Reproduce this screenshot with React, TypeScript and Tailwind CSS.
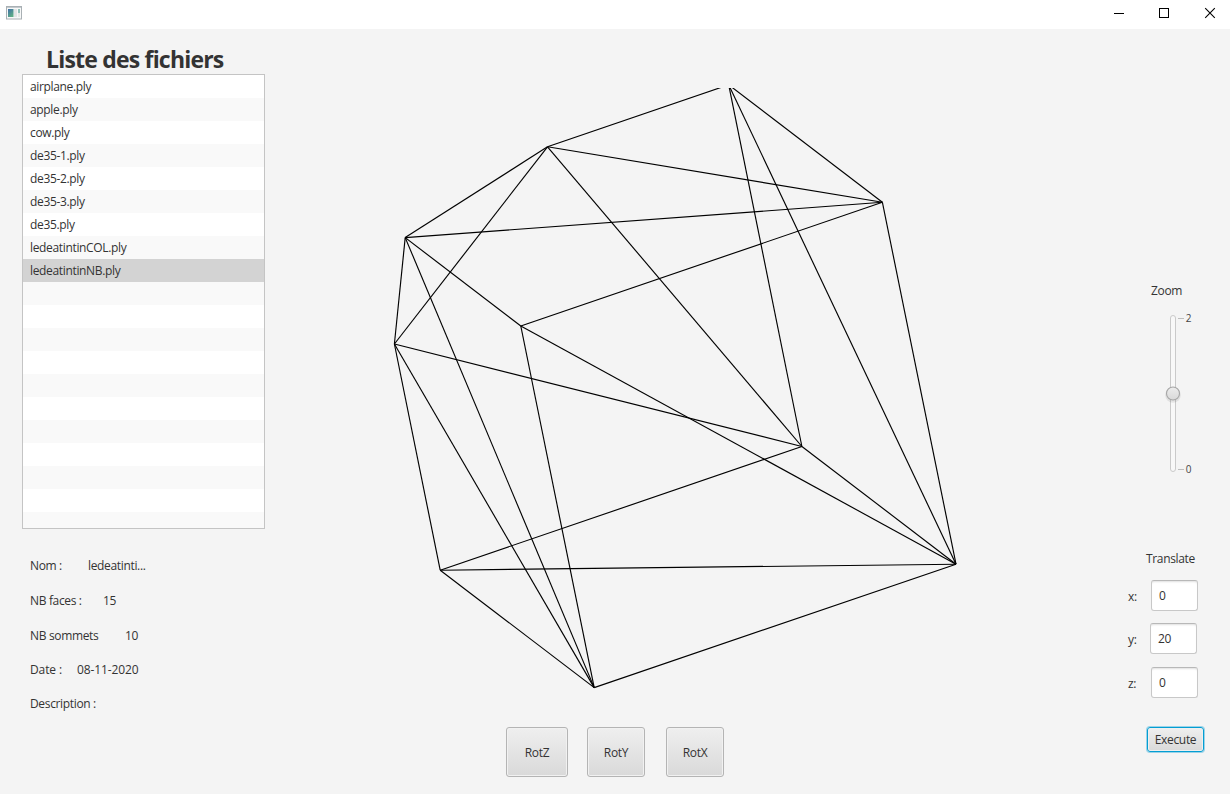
import React from "react";

const files = [
  "airplane.ply",
  "apple.ply",
  "cow.ply",
  "de35-1.ply",
  "de35-2.ply",
  "de35-3.ply",
  "de35.ply",
  "ledeatintinCOL.ply",
  "ledeatintinNB.ply",
];
const rows = Array.from({ length: 20 }, (_, i) => files[i] ?? "");

type Point = [number, number];
const P: Record<string, Point> = {
  a: [547.5, 146.8],
  b: [728.7, 84.8],
  c: [882.4, 202.3],
  d: [405.2, 237.6],
  e: [394.4, 344],
  f: [520.8, 326],
  g: [801.9, 446.5],
  h: [440.2, 570.2],
  i: [956, 564.2],
  j: [594.2, 687.6],
};
const edges = [
  "ab", "ac", "ag", "ae", "ad", "bc", "bg", "bi", "cd", "cf", "ci", "de",
  "df", "dj", "eg", "eh", "ej", "fi", "fj", "gh", "gi", "hi", "hj", "ij",
];

function TitleBar() {
  return (
    <header className="flex h-[29px] items-start justify-between bg-white">
      <svg className="ml-[6px] mt-[6px]" width="16" height="14" viewBox="0 0 16 14">
        <defs>
          <linearGradient id="pane" x1="0" y1="0" x2="0.6" y2="1">
            <stop offset="0" stopColor="#3f6fa8" />
            <stop offset="1" stopColor="#5fae86" />
          </linearGradient>
        </defs>
        <rect x="0.5" y="0.5" width="15" height="12.5" fill="#f7f8f8" stroke="#a9b0b4" />
        <path d="M1 1.5H15" stroke="#c3c9cd" />
        <rect x="2" y="3" width="5.5" height="8" fill="url(#pane)" />
        <rect x="8" y="3" width="3" height="8" fill="#e3e5e6" />
        <rect x="12" y="3" width="2" height="4" fill="#8fc0b8" />
        <rect x="12" y="7" width="2" height="4" fill="#e6e9e6" />
      </svg>
      <svg width="116" height="28" viewBox="0 0 116 28" fill="none" stroke="#000">
        <path d="M0 13.5H10" />
        <rect x="45.5" y="8.5" width="9" height="9" />
        <path d="M91.2 8.2L100.8 17.8M100.8 8.2L91.2 17.8" strokeWidth="1.1" />
      </svg>
    </header>
  );
}

function FileList() {
  return (
    <div className="h-[455px] w-[243px] overflow-hidden border border-[#c4c4c4] bg-white">
      {rows.map((name, i) => (
        <div
          key={i}
          className={`h-[23px] pl-[7px] leading-[24px] ${
            i === 8 ? "bg-[#d3d3d3]" : i % 2 ? "bg-[#f9f9f9]" : "bg-white"
          }`}
        >
          {name}
        </div>
      ))}
    </div>
  );
}

function Info({ label, value, labelClass, rowClass }: { label: string; value?: string; labelClass: string; rowClass: string }) {
  return (
    <div className={`flex items-center pl-2 ${rowClass}`}>
      <span className={labelClass}>{label}</span>
      <span>{value}</span>
    </div>
  );
}

function Wireframe() {
  return (
    <svg className="block" width="620" height="612" viewBox="370 88 620 612">
      <g stroke="#000" strokeWidth="1.15">
        {edges.map((e) => (
          <line key={e} x1={P[e[0]][0]} y1={P[e[0]][1]} x2={P[e[1]][0]} y2={P[e[1]][1]} />
        ))}
      </g>
    </svg>
  );
}

function RotButton({ text, size }: { text: string; size: string }) {
  return (
    <button
      className={`h-[50px] rounded-[3px] border border-[#b4b4b4] bg-linear-to-b from-[#efefef] to-[#d9d9d9] pt-[2px] shadow-[inset_0_0_0_1px_#f1f1f1] ${size}`}
    >
      {text}
    </button>
  );
}

function ZoomSlider() {
  return (
    <svg width="40" height="166" viewBox="1160 310 40 166">
      <defs>
        <linearGradient id="thumb" x1="0" y1="0" x2="0" y2="1">
          <stop offset="0" stopColor="#ededed" />
          <stop offset="1" stopColor="#d9d9d9" />
        </linearGradient>
      </defs>
      <rect x="1170.5" y="315.5" width="5" height="156" rx="2.5" fill="#f8f8f8" stroke="#cacaca" />
      <path d="M1178 318.5H1184M1178 469.5H1184" stroke="#bdbdbd" />
      <circle cx="1173" cy="395" r="7.8" fill="#000" opacity="0.08" />
      <circle cx="1173" cy="393.5" r="6.5" fill="url(#thumb)" stroke="#a6a6a6" strokeWidth="1.1" />
      <g fill="#444" fontSize="10">
        <text x="1185.8" y="322">2</text>
        <text x="1185.8" y="473">0</text>
      </g>
    </svg>
  );
}

function Field({ label, value, rowClass, labelClass }: { label: string; value: string; rowClass: string; labelClass: string }) {
  return (
    <div className={`flex items-start ${rowClass}`}>
      <span className={`pt-[9px] leading-4 ${labelClass}`}>{label}</span>
      <div className="h-[31px] w-[47px] rounded-[3px] border border-[#c8c8c8] border-t-[#b8b8b8] bg-white pl-[7px] leading-[29px] shadow-[inset_0_2px_2px_-1px_#e0e0e0]">
        {value}
      </div>
    </div>
  );
}

export default function App() {
  return (
    <div className="h-[794px] w-[1230px] overflow-hidden bg-[#f4f4f4] font-['Open_Sans','Noto_Sans',sans-serif] text-[12px] tracking-[-0.34px] text-[#333]">
      <TitleBar />
      <main className="flex h-[765px]">
        <section className="w-[370px] pl-[22px] pt-[15px]">
          <h1 className="h-[30px] pl-6 text-[23px] font-bold leading-[31px] tracking-[-0.8px]">Liste des fichiers</h1>
          <FileList />
          <div className="pt-[19px]">
            <Info label="Nom :" value="ledeatinti..." labelClass="w-[58px]" rowClass="h-[35px]" />
            <Info label="NB faces :" value="15" labelClass="w-[73px]" rowClass="h-[35px]" />
            <Info label="NB sommets" value="10" labelClass="w-[95px]" rowClass="h-[35px]" />
            <Info label="Date :" value="08-11-2020" labelClass="w-[47px]" rowClass="h-[34px] tracking-[-0.12px]" />
            <Info label="Description :" labelClass="w-[80px]" rowClass="h-[34px]" />
          </div>
        </section>
        <section className="w-[750px] pt-[59px]">
          <Wireframe />
          <div className="flex pl-[136px] pt-[27px]">
            <RotButton text="RotZ" size="w-[62px] mr-[19px]" />
            <RotButton text="RotY" size="w-[58px] mr-[21px]" />
            <RotButton text="RotX" size="w-[58px]" />
          </div>
        </section>
        <section className="flex w-[110px] flex-col pt-[254px]">
          <div className="h-[27px] pl-[31px] leading-4">Zoom</div>
          <div className="h-[241px] pl-10">
            <ZoomSlider />
          </div>
          <div className="h-[29px] pl-[26px] leading-4">Translate</div>
          <Field label="x:" value="0" rowClass="h-[43px] pl-2" labelClass="w-[23px]" />
          <Field label="y:" value="20" rowClass="h-[44px] pl-2" labelClass="w-[22px]" />
          <Field label="z:" value="0" rowClass="h-[60px] pl-2" labelClass="w-[23px]" />
          <button className="ml-[27px] h-[25px] w-[57px] rounded-[3px] border border-[#039ed3] bg-linear-to-b from-[#efefef] to-[#d9d9d9] shadow-[0_0_0_1px_#9bd3e8,inset_0_0_0_1px_#efefef]">
            Execute
          </button>
        </section>
      </main>
    </div>
  );
}
